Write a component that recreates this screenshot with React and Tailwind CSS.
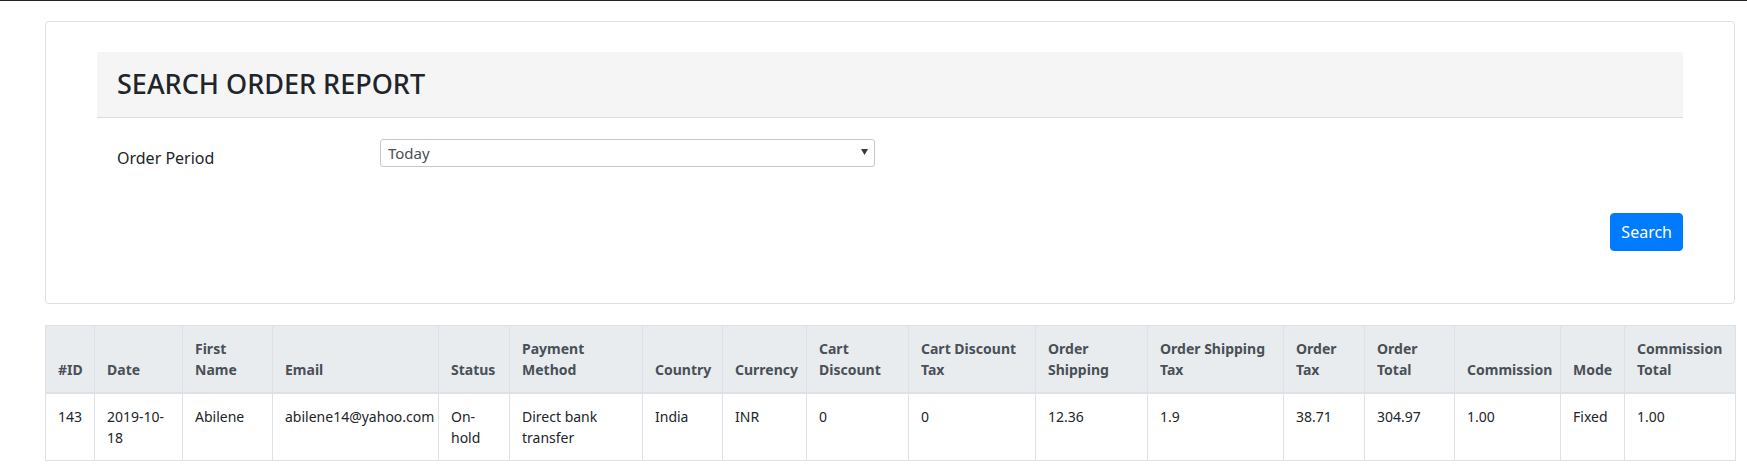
import React from 'react';

const columns = [
    { width: 'w-[49px]', head: ['#ID'], cell: ['143'] },
    { width: 'w-[88px]', head: ['Date'], cell: ['2019-10-', '18'] },
    { width: 'w-[90px]', head: ['First', 'Name'], cell: ['Abilene'] },
    { width: 'w-[166px]', head: ['Email'], cell: ['abilene14@yahoo.com'] },
    { width: 'w-[71px]', head: ['Status'], cell: ['On-', 'hold'] },
    { width: 'w-[133px]', head: ['Payment', 'Method'], cell: ['Direct bank', 'transfer'] },
    { width: 'w-[80px]', head: ['Country'], cell: ['India'] },
    { width: 'w-[84px]', head: ['Currency'], cell: ['INR'] },
    { width: 'w-[102px]', head: ['Cart', 'Discount'], cell: ['0'] },
    { width: 'w-[127px]', head: ['Cart Discount', 'Tax'], cell: ['0'] },
    { width: 'w-[112px]', head: ['Order', 'Shipping'], cell: ['12.36'] },
    { width: 'w-[136px]', head: ['Order Shipping', 'Tax'], cell: ['1.9'] },
    { width: 'w-[81px]', head: ['Order', 'Tax'], cell: ['38.71'] },
    { width: 'w-[90px]', head: ['Order', 'Total'], cell: ['304.97'] },
    { width: 'w-[106px]', head: ['Commission'], cell: ['1.00'] },
    { width: 'w-[64px]', head: ['Mode'], cell: ['Fixed'] },
    { width: 'w-[111px]', head: ['Commission', 'Total'], cell: ['1.00'] },
];

const Lines = ({ lines }) => (
    <>
        {lines.map((l, i) => (
            <span key={i} className="block whitespace-nowrap">{l}</span>
        ))}
    </>
);

export default function App() {
    return (
        <div className="min-h-[476px] bg-white font-['Segoe_UI','Noto_Sans',sans-serif] text-[#212529]">
            <div className="h-px bg-[#212529]" />

            <div className="ml-[45px] mr-[12px] mt-[20px]">
                {/* Search card */}
                <div className="border border-[#dfdfdf] rounded-[4px] px-[51px] pt-[30px] pb-[52px]">
                    <div className="h-[66px] bg-[#f5f5f5] border-b border-[#dddddd] rounded-t-[3px] flex items-center px-[20px]">
                        <h3 className="text-[27px] font-medium leading-[1.2] text-[#212529]">SEARCH ORDER REPORT</h3>
                    </div>

                    <div className="mt-[21px] flex items-start">
                        <label className="w-[283px] pl-[20px] pt-[7px] text-[16px] leading-[24px] text-[#212529]">Order Period</label>
                        <div className="relative w-[495px]">
                            <select className="w-full h-[28px] appearance-none bg-white border border-[#c8c8c8] rounded-[3px] pl-[7px] text-[15px] text-[#495057] outline-none">
                                <option>Today</option>
                                <option>Yesterday</option>
                                <option>Last 7 Days</option>
                                <option>This Month</option>
                            </select>
                            <svg className="absolute right-[7px] top-[10px] pointer-events-none" width="7" height="6" viewBox="0 0 7 6">
                                <path d="M0 0 H7 L3.5 6 Z" fill="#3a3a3a" />
                            </svg>
                        </div>
                    </div>

                    <div className="mt-[43px] flex justify-end">
                        <button className="h-[38px] px-[10px] rounded-[4px] bg-[#007bff] border border-[#007bff] text-white text-[16px] leading-[24px]">
                            Search
                        </button>
                    </div>
                </div>

                {/* Results table */}
                <table className="mt-[21px] w-[1690px] table-fixed border border-[#dee2e6] text-[14px] leading-[21px]">
                    <colgroup>
                        {columns.map((c, i) => (
                            <col key={i} className={c.width} />
                        ))}
                    </colgroup>
                    <thead>
                        <tr className="bg-[#e9ecef] text-[#495057]">
                            {columns.map((c, i) => (
                                <th key={i} className="p-[12px] text-left font-bold align-bottom border border-[#dee2e6] border-b-2">
                                    <Lines lines={c.head} />
                                </th>
                            ))}
                        </tr>
                    </thead>
                    <tbody>
                        <tr>
                            {columns.map((c, i) => (
                                <td key={i} className="p-[12px] align-top border border-[#dee2e6]">
                                    <Lines lines={c.cell} />
                                </td>
                            ))}
                        </tr>
                    </tbody>
                </table>
            </div>
        </div>
    );
}
